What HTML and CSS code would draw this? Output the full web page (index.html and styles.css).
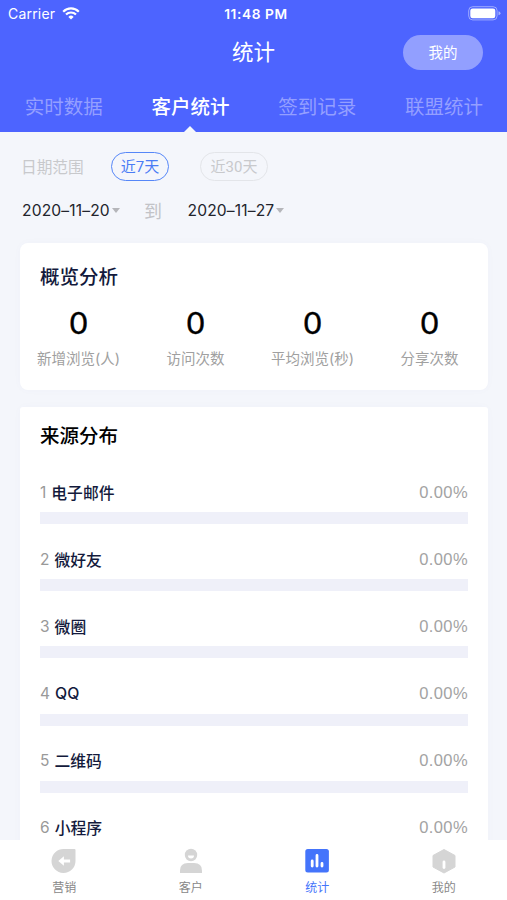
FILE: index.html
```html
<!DOCTYPE html>
<html lang="zh-CN">
<head>
<meta charset="utf-8">
<meta name="viewport" content="width=device-width, initial-scale=1">
<title>统计</title>
<link rel="stylesheet" href="styles.css">
</head>
<body>
<div class="app">
  <header class="header">
    <div class="status">
      <div class="carrier"><span>Carrier</span>
        <svg width="18" height="13" viewBox="0 0 18 13" fill="none" stroke="#fff" stroke-width="2.2"><path d="M1.2 4.7a11 11 0 0 1 15.6 0M4 7.6a7 7 0 0 1 10 0"/><path d="M9 12.5 6.4 9.9a3.7 3.7 0 0 1 5.2 0z" fill="#fff" stroke="none"/></svg>
      </div>
      <div class="clock">11:48 PM</div>
      <svg class="battery" width="33" height="15" viewBox="0 0 33 15"><rect x=".7" y=".7" width="28.4" height="13.2" rx="4" fill="none" stroke="#fff" stroke-opacity=".45"/><rect x="2.3" y="2.4" width="25" height="9.8" rx="2.3" fill="#fff"/><path d="M30.5 5.3q2 .5 2 2t-2 2z" fill="#fff" opacity=".5"/></svg>
    </div>
    <div class="titlebar"><h1>统计</h1><button class="mine">我的</button></div>
    <nav class="tabs"><a>实时数据</a><a class="active">客户统计</a><a>签到记录</a><a>联盟统计</a></nav>
  </header>
  <main class="content">
    <section class="filter">
      <div class="range"><span class="label">日期范围</span><span class="pill on">近7天</span><span class="pill">近30天</span></div>
      <div class="dates"><span class="date">2020–11–20</span><span class="to">到</span><span class="date">2020–11–27</span></div>
    </section>
    <section class="card overview">
      <h2>概览分析</h2>
      <div class="stats">
        <div><b>0</b><span>新增浏览(人)</span></div>
        <div><b>0</b><span>访问次数</span></div>
        <div><b>0</b><span>平均浏览(秒)</span></div>
        <div><b>0</b><span>分享次数</span></div>
      </div>
    </section>
    <section class="card sources">
      <h2>来源分布</h2>
      <ol>
        <li><div class="row"><i>1</i><strong>电子邮件</strong><em>0.00%</em></div><div class="bar"></div></li>
        <li><div class="row"><i>2</i><strong>微好友</strong><em>0.00%</em></div><div class="bar"></div></li>
        <li><div class="row"><i>3</i><strong>微圈</strong><em>0.00%</em></div><div class="bar"></div></li>
        <li><div class="row"><i>4</i><strong>QQ</strong><em>0.00%</em></div><div class="bar"></div></li>
        <li><div class="row"><i>5</i><strong>二维码</strong><em>0.00%</em></div><div class="bar"></div></li>
        <li><div class="row"><i>6</i><strong>小程序</strong><em>0.00%</em></div><div class="bar"></div></li>
      </ol>
    </section>
  </main>
  <footer class="tabbar">
    <a><svg width="26" height="26" viewBox="0 0 26 26"><path d="M13 1h10.5a1 1 0 0 1 1 1v11A12 12 0 1 1 13 1z" fill="#d5d5d5"/><path d="m7.3 13 5.6-4.8v3.3h6.2v3h-6.2v3.3z" fill="#fff"/></svg><span>营销</span></a>
    <a><svg width="26" height="26" viewBox="0 0 26 26"><circle cx="13" cy="7" r="6.2" fill="#d5d5d5"/><path d="M10 7.5h6a3 3 0 0 1-6 0z" fill="#fff"/><path d="M2 25v-2.5q0-7.500 8-7.500h6q8 0 8 7.500V25z" fill="#d5d5d5"/></svg><span>客户</span></a>
    <a class="active"><svg width="26" height="26" viewBox="0 0 26 26"><rect x="1.3" y="1" width="23.6" height="23.5" rx="2.5" fill="#4474fb"/><path d="M8.2 18v-5M13 18v-10.5M18 18v-2.5" stroke="#fff" stroke-width="2.8" stroke-linecap="round"/></svg><span>统计</span></a>
    <a><svg width="26" height="26" viewBox="0 0 26 26"><path d="M13 1.5 24 7.5v11.500L13 25 2 19V7.500z" fill="#d5d5d5" stroke="#d5d5d5" stroke-linejoin="round"/><path d="M13 14v5.500" stroke="#fff" stroke-width="2.8" stroke-linecap="round"/></svg><span>我的</span></a>
  </footer>
</div>
</body>
</html>
```
FILE: styles.css
```css
* { box-sizing: border-box; margin: 0; padding: 0; }
body { font-family: Inter, "Noto Sans CJK SC", sans-serif; background: #f4f6fb; color: #000; }
.app { height: 900px; display: flex; flex-direction: column; overflow: hidden; }
.header { height: 132px; flex: none; background: #4d64ff; color: #fff; display: flex; flex-direction: column; }
.status { height: 27px; display: grid; grid-template-columns: 1fr auto 1fr; align-items: center; padding: 0 6px 0 8px; font-size: 14px; }
.carrier { display: flex; align-items: center; gap: 7px; letter-spacing: .2px; }
.clock { font-weight: 600; letter-spacing: .6px; padding-left: 3px; font-size: 13.7px; }
.battery { justify-self: end; }
.titlebar { height: 50px; display: grid; grid-template-columns: 1fr auto 1fr; align-items: center; padding-right: 24px; }
.titlebar h1 { grid-column: 2; font-size: 21.5px; font-weight: 400; line-height: 30px; padding-left: 24px; }
.mine { justify-self: end; width: 80px; height: 35px; border: 0; border-radius: 18px; background: #929fff; color: #fff; font: inherit; font-size: 14.5px; padding-bottom: 2px; }
.tabs { flex: 1; display: grid; grid-template-columns: repeat(4, 1fr); }
.tabs a { position: relative; text-align: center; font-size: 19.5px; line-height: 28px; padding: 16px 0 0 1px; color: #949fff; }
.tabs .active { color: #fff; font-weight: 500; }
.tabs .active::after { content: ""; position: absolute; left: 50%; bottom: 0; margin-left: -6px; border: 6px solid transparent; border-top: 0; border-bottom-color: #f6f8fc; }
.content { flex: 1; min-height: 0; overflow: hidden; padding: 0 19px 0 20px; }
.filter { height: 111px; padding: 19px 0 0 1px; }
.range { display: flex; align-items: center; height: 30px; font-size: 15.7px; color: #c8c9cc; }
.label { width: 90px; }
.pill { height: 29px; line-height: 28px; border: 1px solid #e3e5e9; border-radius: 15px; font-size: 15px; white-space: nowrap; width: 68px; text-align: center; font-family: Roboto, "Noto Sans CJK SC", sans-serif; }
.pill.on { color: #4a7cf5; border: 1.5px solid #5687f8; width: 58px; margin-right: 31px; }
.dates { display: flex; align-items: center; height: 30px; margin-top: 14px; padding-left: 1px; color: #22242c; font-size: 15.6px; }
.date { display: flex; align-items: center; gap: 2px; width: 122px; white-space: nowrap; letter-spacing: .15px; }
.date::after { content: ""; border: 4.5px solid transparent; border-top: 5px solid #b5b6ba; border-bottom: 0; }
.to { width: 43.5px; color: #c2c3c7; font-size: 18px; }
.card { background: #fff; border-radius: 8px; padding: 0 20px; box-shadow: 0 0 10px rgba(70, 90, 150, .025); }
.card h2 { font-size: 19.5px; font-weight: 500; line-height: 28px; }
.overview { height: 147px; padding-top: 20px; margin-bottom: 17px; }
.overview h2 { color: #131a3c; }
.stats { display: grid; grid-template-columns: repeat(4, 1fr); margin: 11px -20px 0; }
.stats div { display: flex; flex-direction: column; align-items: center; }
.stats b { font-family: Lato, sans-serif; font-size: 30.5px; font-weight: 400; line-height: 40px; -webkit-text-stroke: .4px #000; }
.stats span { font-size: 14.5px; line-height: 22px; color: #a0a0a0; margin-top: 6px; }
.sources { height: 520px; padding-top: 15px; border-radius: 3px; }
.sources ol { list-style: none; padding-top: 29px; }
.sources li { height: 67.2px; }
.row { display: flex; align-items: center; height: 26px; font-size: 15.8px; }
.row i, .row em { font-style: normal; color: #999; }
.row i { font-size: 15.5px; }
.row em { font-family: "Liberation Sans", sans-serif; font-size: 16.5px; margin-left: auto; color: #a3a3a3; letter-spacing: .4px; }
.row strong { font-weight: 500; color: #131a3c; margin-left: 5px; }
.bar { height: 12px; margin-top: 7px; background: #eff0f9; }
.tabbar { height: 60px; flex: none; background: #fff; display: grid; grid-template-columns: repeat(4, 1fr); padding: 8px 0 0 1px; }
.tabbar a { display: flex; flex-direction: column; align-items: center; font-size: 12px; line-height: 18px; color: #888; }
.tabbar svg { flex: none; }
.tabbar span { margin-top: 5px; }
.tabbar .active { color: #4474fb; }
```
